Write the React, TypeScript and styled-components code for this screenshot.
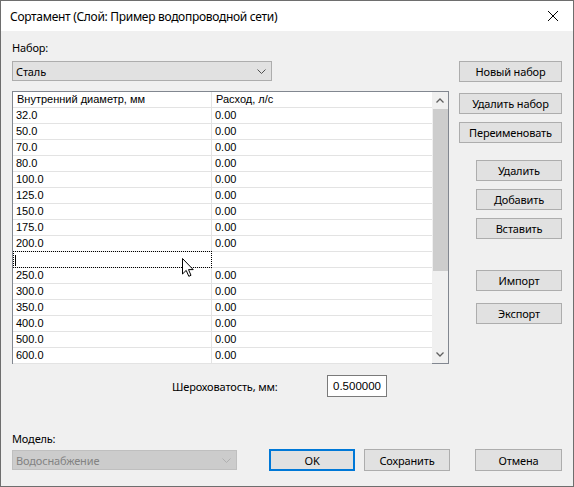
import React from "react";
import styled, { createGlobalStyle } from "styled-components";

const Global = createGlobalStyle`
  html, body { margin: 0; padding: 0; background: #f0f0f0; }
  * { box-sizing: border-box; }
`;

const UI = `"Noto Sans", "Liberation Sans", sans-serif`;
const GRIDFONT = `"Liberation Sans", Arial, sans-serif`;

const Window = styled.div`
  width: 574px;
  height: 487px;
  border: 1px solid #6e6e6e;
  background: #f0f0f0;
  display: flex;
  flex-direction: column;
  font-family: ${UI};
  font-size: 11px;
  letter-spacing: -0.15px;
  color: #000;
  overflow: hidden;
`;

const TitleBar = styled.div`
  height: 30px;
  background: #fff;
  display: flex;
  align-items: center;
  justify-content: space-between;
  padding: 0 10px 0 9px;
  flex-shrink: 0;
`;

const Title = styled.div`
  font-size: 12px;
  letter-spacing: -0.3px;
`;

const CloseIcon = styled.svg`
  width: 10px;
  height: 10px;
  margin-right: 5px;
`;

const Body = styled.div`
  flex: 1;
  display: flex;
  flex-direction: column;
  padding: 9px 11px 0 11px;
`;

const TopArea = styled.div`
  display: flex;
`;

const LeftCol = styled.div`
  width: 437px;
  display: flex;
  flex-direction: column;
`;

const Label = styled.div`
  height: 16px;
  line-height: 16px;
`;

const Combo = styled.div<{ $disabled?: boolean; $width: number }>`
  width: ${(p) => p.$width}px;
  height: 20px;
  margin-top: ${(p) => (p.$disabled ? 3 : 5)}px;
  background: ${(p) => (p.$disabled ? "#cccccc" : "#e1e1e1")};
  border: 1px solid ${(p) => (p.$disabled ? "#bfbfbf" : "#adadad")};
  color: ${(p) => (p.$disabled ? "#838383" : "#000")};
  display: flex;
  align-items: center;
  justify-content: space-between;
  padding: 0 5px 0 3px;
`;

const Chevron = styled.svg`
  width: 9px;
  height: 5px;
`;

const TableBox = styled.div`
  position: relative;
  margin-top: 10px;
  width: 437px;
  height: 273px;
  border: 1px solid #828790;
  background: #fff;
  display: flex;
`;

const GridArea = styled.div`
  flex: 1;
  display: flex;
  flex-direction: column;
  font-family: ${GRIDFONT};
  font-size: 11px;
  letter-spacing: 0;
`;

const Row = styled.div`
  height: 16px;
  display: grid;
  grid-template-columns: 199px 1fr;
  border-bottom: 1px solid #e3e3e3;
`;

const Cell = styled.div<{ $editing?: boolean }>`
  line-height: 15px;
  padding-left: 3px;
  border-right: 1px solid #e3e3e3;
  white-space: nowrap;
  position: relative;
  ${(p) =>
    p.$editing
      ? `border: 1px dotted #000; margin-top: -1px; height: 17px;`
      : ""}
  &:last-child { border-right: none; }
`;

const HeaderCell = styled(Cell)`
  padding-left: 4px;
  color: #000;
`;

const Caret = styled.span`
  position: absolute;
  left: 1px;
  top: 3px;
  width: 1px;
  height: 11px;
  background: #000;
`;

const ScrollBar = styled.div`
  width: 16px;
  background: #f0f0f0;
  display: flex;
  flex-direction: column;
  align-items: center;
`;

const ScrollArrow = styled.div`
  height: 17px;
  width: 16px;
  display: flex;
  align-items: center;
  justify-content: center;
`;

const Thumb = styled.div`
  width: 15px;
  height: 162px;
  background: #cdcdcd;
`;

const Spacer = styled.div`
  flex: 1;
`;

const Cursor = styled.svg`
  position: absolute;
  left: 169px;
  top: 166px;
  width: 12px;
  height: 19px;
`;

const RoughRow = styled.div`
  display: flex;
  align-items: center;
  margin-top: 11px;
  padding-left: 160px;
  height: 22px;
`;

const RoughLabel = styled.div`
  width: 155px;
`;

const Input = styled.div`
  width: 60px;
  height: 22px;
  background: #fff;
  border: 1px solid #7a7a7a;
  font-family: ${GRIDFONT};
  font-size: 11.5px;
  letter-spacing: 0;
  line-height: 20px;
  padding-left: 5px;
`;

const RightCol = styled.div`
  margin-left: 9px;
  padding-top: 21px;
  width: 104px;
  display: flex;
  flex-direction: column;
  align-items: flex-end;
`;

const Button = styled.div<{ $width: number; $gap?: number; $focused?: boolean; $tall?: boolean }>`
  width: ${(p) => p.$width}px;
  height: ${(p) => (p.$tall ? 22 : 21)}px;
  margin-top: ${(p) => p.$gap ?? 0}px;
  background: #e1e1e1;
  border: ${(p) => (p.$focused ? "2px solid #0078d7" : "1px solid #adadad")};
  display: flex;
  align-items: center;
  justify-content: center;
  white-space: nowrap;
  flex-shrink: 0;
`;

const BottomRow = styled.div`
  display: flex;
  align-items: flex-end;
  margin-top: 34px;
`;

const ModelGroup = styled.div`
  display: flex;
  flex-direction: column;
  width: 225px;
`;

const BottomButtons = styled.div`
  display: flex;
  gap: 9px;
  margin-left: 32px;
  margin-bottom: -1px;
`;

const CancelWrap = styled.div`
  margin-left: 16px;
`;

const chevronDown = (color: string) => (
  <Chevron viewBox="0 0 9 5">
    <polyline points="0.5,0.5 4.5,4.5 8.5,0.5" fill="none" stroke={color} strokeWidth="1" />
  </Chevron>
);

const rows: [string, string][] = [
  ["32.0", "0.00"],
  ["50.0", "0.00"],
  ["70.0", "0.00"],
  ["80.0", "0.00"],
  ["100.0", "0.00"],
  ["125.0", "0.00"],
  ["150.0", "0.00"],
  ["175.0", "0.00"],
  ["200.0", "0.00"],
  ["", ""],
  ["250.0", "0.00"],
  ["300.0", "0.00"],
  ["350.0", "0.00"],
  ["400.0", "0.00"],
  ["500.0", "0.00"],
  ["600.0", "0.00"],
];

export default function App() {
  return (
    <>
      <Global />
      <Window>
        <TitleBar>
          <Title>Сортамент (Слой: Пример водопроводной сети)</Title>
          <CloseIcon viewBox="0 0 10 10">
            <line x1="0" y1="0" x2="10" y2="10" stroke="#000" strokeWidth="1" />
            <line x1="10" y1="0" x2="0" y2="10" stroke="#000" strokeWidth="1" />
          </CloseIcon>
        </TitleBar>
        <Body>
          <TopArea>
            <LeftCol>
              <Label>Набор:</Label>
              <Combo $width={260}>
                <span>Сталь</span>
                {chevronDown("#505050")}
              </Combo>
              <TableBox>
                <GridArea>
                  <Row>
                    <HeaderCell>Внутренний диаметр, мм</HeaderCell>
                    <HeaderCell>Расход, л/с</HeaderCell>
                  </Row>
                  {rows.map(([d, q], i) =>
                    d === "" ? (
                      <Row key={i}>
                        <Cell $editing>
                          <Caret />
                        </Cell>
                        <Cell />
                      </Row>
                    ) : (
                      <Row key={i}>
                        <Cell>{d}</Cell>
                        <Cell>{q}</Cell>
                      </Row>
                    )
                  )}
                </GridArea>
                <ScrollBar>
                  <ScrollArrow>
                    <svg width="8" height="5" viewBox="0 0 8 5">
                      <polyline points="0.5,4.5 4,1 7.5,4.5" fill="none" stroke="#606060" strokeWidth="1.3" />
                    </svg>
                  </ScrollArrow>
                  <Thumb />
                  <Spacer />
                  <ScrollArrow>
                    <svg width="8" height="5" viewBox="0 0 8 5">
                      <polyline points="0.5,0.5 4,4 7.5,0.5" fill="none" stroke="#606060" strokeWidth="1.3" />
                    </svg>
                  </ScrollArrow>
                </ScrollBar>
                <Cursor viewBox="0 0 12 19">
                  <path
                    d="M0.5,0.5 L0.5,16 L4.2,12.4 L6.8,18.3 L9,17.3 L6.5,11.6 L11.2,11.6 Z"
                    fill="#fff"
                    stroke="#000"
                    strokeWidth="1"
                  />
                </Cursor>
              </TableBox>
              <RoughRow>
                <RoughLabel>Шероховатость, мм:</RoughLabel>
                <Input>0.500000</Input>
              </RoughRow>
            </LeftCol>
            <RightCol>
              <Button $width={103}>Новый набор</Button>
              <Button $width={103} $gap={11}>Удалить набор</Button>
              <Button $width={103} $gap={8}>Переименовать</Button>
              <Button $width={86} $gap={17}>Удалить</Button>
              <Button $width={86} $gap={8}>Добавить</Button>
              <Button $width={86} $gap={8}>Вставить</Button>
              <Button $width={86} $gap={31}>Импорт</Button>
              <Button $width={86} $gap={12}>Экспорт</Button>
            </RightCol>
          </TopArea>
          <BottomRow>
            <ModelGroup>
              <Label>Модель:</Label>
              <Combo $width={225} $disabled>
                <span>Водоснабжение</span>
                {chevronDown("#b0b0b0")}
              </Combo>
            </ModelGroup>
            <BottomButtons>
              <Button $width={86} $focused $tall>OK</Button>
              <Button $width={86} $tall>Сохранить</Button>
              <CancelWrap>
                <Button $width={87} $tall>Отмена</Button>
              </CancelWrap>
            </BottomButtons>
          </BottomRow>
        </Body>
      </Window>
    </>
  );
}
